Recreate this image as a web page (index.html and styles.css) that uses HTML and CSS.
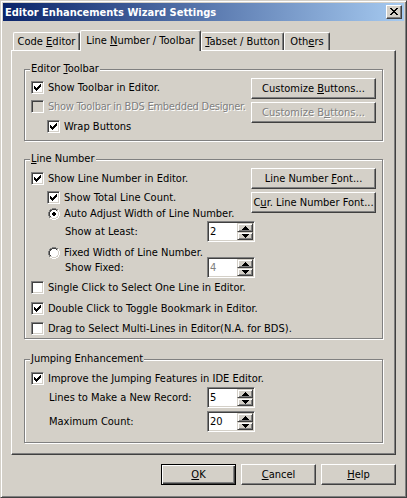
FILE: index.html
```html
<!DOCTYPE html>
<html>
<head>
<meta charset="utf-8">
<title>Editor Enhancements Wizard Settings</title>
<link rel="stylesheet" href="styles.css">
</head>
<body>
<svg class="defs" width="0" height="0" aria-hidden="true">
  <defs>
    <symbol id="check" viewBox="0 0 7 7"><path d="M0 2h1v3H0zM1 3h1v3H1zM2 4h1v3H2zM3 3h1v3H3zM4 2h1v3H4zM5 1h1v3H5zM6 0h1v3H6z"/></symbol>
    <symbol id="up" viewBox="0 0 7 4"><path d="M3 0h1v1H3zM2 1h3v1H2zM1 2h5v1H1zM0 3h7v1H0z"/></symbol>
    <symbol id="down" viewBox="0 0 7 4"><path d="M0 0h7v1H0zM1 1h5v1H1zM2 2h3v1H2zM3 3h1v1H3z"/></symbol>
    <symbol id="radio" viewBox="0 0 12 12">
      <path fill="#808080" d="M4 0h4v1H4zM2 1h2v1H2zM8 1h2v1H8zM1 2h1v2H1zM0 4h1v4H0zM1 8h1v2H1z"/>
      <path fill="#fff" d="M10 2h1v2h-1zM11 4h1v4h-1zM10 8h1v2h-1zM2 10h2v1H2zM8 10h2v1H8zM4 11h4v1H4z"/>
      <path fill="#404040" d="M4 1h4v1H4zM2 2h2v1H2zM8 2h1v1H8zM2 3h1v1H2zM1 4h1v4H1zM2 8h1v1H2z"/>
      <path fill="#d4d0c8" d="M9 2h1v2H9zM10 4h1v4h-1zM9 8h1v1H9zM2 9h2v1H2zM8 9h2v1H8zM4 10h4v1H4z"/>
      <path fill="#fff" d="M4 2h4v1H4zM3 3h6v1H3zM2 4h8v4H2zM3 8h6v1H3zM4 9h4v1H4z"/>
    </symbol>
  </defs>
</svg>

<div class="window">
  <div class="titlebar">
    <span class="title">Editor Enhancements Wizard Settings</span>
    <span class="close"><svg width="8" height="7" viewBox="0 0 8 7" shape-rendering="crispEdges"><path d="M0 0h2v1H0zM6 0h2v1H6zM1 1h2v1H1zM5 1h2v1H5zM2 2h4v1H2zM3 3h2v1H3zM2 4h4v1H2zM1 5h2v1H1zM5 5h2v1H5zM0 6h2v1H0zM6 6h2v1H6z"/></svg></span>
  </div>

  <div class="client">
    <div class="tabs">
      <div class="tab t1"><span>Code <u>E</u>ditor</span></div>
      <div class="tab t2 active"><span>Line <u>N</u>umber / Toolbar</span></div>
      <div class="tab t3"><span><u>T</u>abset / Button</span></div>
      <div class="tab t4"><span>Oth<u>e</u>rs</span></div>
    </div>

    <div class="panel">
      <!-- Editor Toolbar -->
      <div class="group g1">
        <span class="legend">Editor <u>T</u>oolbar</span>
        <div class="gbody">
          <div class="col pt11">
            <div class="row"><span class="cb"><svg class="ck" shape-rendering="crispEdges"><use href="#check"/></svg></span><span>Show Toolbar in Editor.</span></div>
            <div class="row mt6"><span class="cb disabled"></span><span class="dis tight">Show Toolbar in BDS Embedded Designer.</span></div>
            <div class="row mt7 ind"><span class="cb"><svg class="ck" shape-rendering="crispEdges"><use href="#check"/></svg></span><span>Wrap Buttons</span></div>
          </div>
          <div class="btncol">
            <div class="btn"><span>Customize <u>B</u>uttons...</span></div>
            <div class="btn dis"><span>Customize B<u>u</u>ttons...</span></div>
          </div>
        </div>
      </div>

      <!-- Line Number -->
      <div class="group g2">
        <span class="legend"><u>L</u>ine Number</span>
        <div class="gbody">
          <div class="col pt12">
            <div class="row"><span class="cb"><svg class="ck" shape-rendering="crispEdges"><use href="#check"/></svg></span><span>Show Line Number in Editor.</span></div>
            <div class="row mt6 ind"><span class="cb"><svg class="ck" shape-rendering="crispEdges"><use href="#check"/></svg></span><span>Show Total Line Count.</span></div>
            <div class="rrow mt4 ind"><span class="rd"><svg width="12" height="12" shape-rendering="crispEdges"><use href="#radio"/></svg><i class="dot"></i></span><span>Auto Adjust Width of Line Number.</span></div>
            <div class="field mt1"><span class="flabel l2">Show at Least:</span>
              <span class="spin"><span class="val">2</span><span class="arrows"><span class="sb up"><svg width="7" height="4" shape-rendering="crispEdges"><use href="#up"/></svg></span><span class="sb dn"><svg width="7" height="4" shape-rendering="crispEdges"><use href="#down"/></svg></span></span></span>
            </div>
            <div class="rrow mt5 ind"><span class="rd"><svg width="12" height="12" shape-rendering="crispEdges"><use href="#radio"/></svg></span><span>Fixed Width of Line Number.</span></div>
            <div class="field mtn2"><span class="flabel l2">Show Fixed:</span>
              <span class="spin"><span class="val dis-val">4</span><span class="arrows"><span class="sb up"><svg width="7" height="4" shape-rendering="crispEdges"><use href="#up"/></svg></span><span class="sb dn"><svg width="7" height="4" shape-rendering="crispEdges"><use href="#down"/></svg></span></span></span>
            </div>
            <div class="row mt3"><span class="cb"></span><span>Single Click to Select One Line in Editor.</span></div>
            <div class="row mt8"><span class="cb"><svg class="ck" shape-rendering="crispEdges"><use href="#check"/></svg></span><span>Double Click to Toggle Bookmark in Editor.</span></div>
            <div class="row mt7"><span class="cb"></span><span>Drag to Select Multi-Lines in Editor(N.A. for BDS).</span></div>
          </div>
          <div class="btncol">
            <div class="btn"><span>Line Number <u>F</u>ont...</span></div>
            <div class="btn"><span>C<u>u</u>r. Line Number Font...</span></div>
          </div>
        </div>
      </div>

      <!-- Jumping Enhancement -->
      <div class="group g3">
        <span class="legend"><u>J</u>umping Enhancement</span>
        <div class="gbody">
          <div class="col pt12">
            <div class="row"><span class="cb"><svg class="ck" shape-rendering="crispEdges"><use href="#check"/></svg></span><span>Improve the Jumping Features in IDE Editor.</span></div>
            <div class="field mt2"><span class="flabel l3">Lines to Make a New Record:</span>
              <span class="spin"><span class="val">5</span><span class="arrows"><span class="sb up"><svg width="7" height="4" shape-rendering="crispEdges"><use href="#up"/></svg></span><span class="sb dn"><svg width="7" height="4" shape-rendering="crispEdges"><use href="#down"/></svg></span></span></span>
            </div>
            <div class="field mt3"><span class="flabel l3">Maximum Count:</span>
              <span class="spin"><span class="val">20</span><span class="arrows"><span class="sb up"><svg width="7" height="4" shape-rendering="crispEdges"><use href="#up"/></svg></span><span class="sb dn"><svg width="7" height="4" shape-rendering="crispEdges"><use href="#down"/></svg></span></span></span>
            </div>
          </div>
        </div>
      </div>
    </div>

    <div class="footer">
      <div class="btn dlg default"><span><u>O</u>K</span></div>
      <div class="btn dlg"><span><u>C</u>ancel</span></div>
      <div class="btn dlg"><span><u>H</u>elp</span></div>
    </div>
  </div>
</div>
</body>
</html>
```

FILE: styles.css
```css
* { box-sizing: border-box; }
html, body { margin: 0; padding: 0; }
body {
  width: 407px;
  height: 498px;
  overflow: hidden;
  background: #d4d0c8;
  font-family: "DejaVu Sans Condensed", "DejaVu Sans", sans-serif;
  font-stretch: condensed;
  font-size: 11px;
  color: #000;
}
.defs { position: absolute; width: 0; height: 0; overflow: hidden; }
u { text-underline-offset: 1px; }

.window {
  width: 407px;
  height: 498px;
  border: 1px solid;
  border-color: #d4d0c8 #404040 #404040 #d4d0c8;
  box-shadow: inset 1px 1px #fff, inset -1px -1px #808080;
  padding: 2px;
  display: flex;
  flex-direction: column;
}

.titlebar {
  flex: none;
  height: 18px;
  display: flex;
  align-items: center;
  justify-content: space-between;
  padding: 0 2px;
  background: linear-gradient(to right, #0a246a, #a6caf0);
  color: #fff;
  font-weight: bold;
  white-space: nowrap;
}
.close {
  width: 16px;
  height: 14px;
  border: 1px solid;
  border-color: #fff #404040 #404040 #fff;
  box-shadow: inset -1px -1px #808080;
  background: #d4d0c8;
  padding: 2px 0 0 3px;
  display: flex;
  align-items: flex-start;
}
.close svg { display: block; }

.client { flex: 1; padding: 9px 8px 0 8px; }

.tabs {
  display: flex;
  align-items: flex-end;
  height: 20px;
  padding-left: 2px;
}
.tab {
  height: 18px;
  display: flex;
  align-items: center;
  justify-content: center;
  padding-bottom: 1px;
  border-left: 1px solid #fff;
  border-top: 1px solid #fff;
  border-right: 1px solid #404040;
  box-shadow: inset -1px 0 #808080;
  border-radius: 2px 2px 0 0;
  white-space: nowrap;
  background: #d4d0c8;
}
.tab.active {
  height: 21px;
  margin-bottom: -1px;
  padding-bottom: 2px;
  position: relative;
  z-index: 1;
}
.t1 { width: 67px; }
.t2 { width: 121px; }
.t3 { width: 83px; }
.t4 { width: 46px; }

.panel {
  height: 405px;
  border: 1px solid;
  border-color: #fff #404040 #404040 #fff;
  box-shadow: inset -1px -1px #808080;
  padding-left: 12px;
}

.group {
  position: relative;
  width: 359px;
  border: 1px solid #808080;
  box-shadow: inset 1px 1px #fff, 1px 1px #fff;
}
.g1 { margin-top: 18px; height: 72px; }
.g2 { margin-top: 18px; height: 180px; }
.g3 { margin-top: 20px; height: 84px; }
.legend {
  position: absolute;
  top: -8px;
  left: 5px;
  padding: 0 1px;
  line-height: 13px;
  background: #d4d0c8;
  white-space: nowrap;
}

.gbody { display: flex; height: 100%; }
.col {
  flex: 1;
  min-width: 0;
  padding-left: 6px;
  display: flex;
  flex-direction: column;
}
.pt11 { padding-top: 11px; }
.pt12 { padding-top: 12px; }
.btncol {
  flex: none;
  width: 131px;
  padding: 8px 6px 0 0;
  display: flex;
  flex-direction: column;
  gap: 3px;
}

.row, .rrow {
  display: flex;
  align-items: center;
  gap: 4px;
  white-space: nowrap;
  flex: none;
}
.row { height: 13px; line-height: 13px; }
.rrow { height: 12px; line-height: 12px; }
.ind { margin-left: 16px; }
.mt1 { margin-top: 1px; }
.mt2 { margin-top: 2px; }
.mt3 { margin-top: 3px; }
.mt4 { margin-top: 4px; }
.mt5 { margin-top: 5px; }
.mt6 { margin-top: 6px; }
.mt7 { margin-top: 7px; }
.mt8 { margin-top: 8px; }
.mtn2 { margin-top: -2px; }

.cb {
  flex: none;
  width: 13px;
  height: 13px;
  border: 1px solid;
  border-color: #808080 #fff #fff #808080;
  box-shadow: inset 1px 1px #404040, inset -1px -1px #d4d0c8;
  background: #fff;
  padding: 2px;
}
.cb.disabled { background: #d4d0c8; }
.ck { display: block; width: 7px; height: 7px; }

.rd {
  flex: none;
  position: relative;
  width: 12px;
  height: 12px;
  margin-left: 1px;
}
.rd svg { display: block; }
.dot {
  position: absolute;
  left: 4px;
  top: 4px;
  width: 4px;
  height: 4px;
  background: #000;
  clip-path: polygon(25% 0, 75% 0, 75% 25%, 100% 25%, 100% 75%, 75% 75%, 75% 100%, 25% 100%, 25% 75%, 0 75%, 0 25%, 25% 25%);
}

.dis { color: #808080; text-shadow: 1px 1px #fff; }
.tight { letter-spacing: -0.25px; }

.field {
  display: flex;
  align-items: center;
  height: 21px;
  flex: none;
  white-space: nowrap;
}
.flabel { flex: none; }
.l2 { margin-left: 34px; width: 142px; }
.l3 { margin-left: 18px; width: 158px; }

.spin {
  flex: none;
  width: 48px;
  height: 21px;
  border: 1px solid;
  border-color: #808080 #fff #fff #808080;
  box-shadow: inset 1px 1px #404040, inset -1px -1px #d4d0c8;
  background: #fff;
  padding: 1px;
  display: flex;
}
.val { flex: 1; padding-left: 1px; line-height: 17px; }
.dis-val { color: #808080; }
.arrows { flex: none; width: 16px; display: flex; flex-direction: column; }
.sb {
  display: flex;
  align-items: center;
  justify-content: center;
  border: 1px solid;
  border-color: #d4d0c8 #404040 #404040 #d4d0c8;
  box-shadow: inset 1px 1px #fff, inset -1px -1px #808080;
  background: #d4d0c8;
}
.sb.up { height: 9px; }
.sb.dn { height: 8px; }
.sb svg { display: block; }

.btn {
  height: 21px;
  width: 125px;
  border: 1px solid;
  border-color: #fff #404040 #404040 #fff;
  box-shadow: inset -1px -1px #808080;
  background: #d4d0c8;
  display: flex;
  align-items: center;
  justify-content: center;
  white-space: nowrap;
  line-height: 13px;
}

.footer {
  display: flex;
  justify-content: flex-end;
  gap: 5px;
  margin-top: 9px;
}
.btn.dlg { width: 75px; }
.btn.default {
  border-color: #000;
  box-shadow: inset 1px 1px #fff, inset -1px -1px #404040, inset -2px -2px #808080;
}
```
